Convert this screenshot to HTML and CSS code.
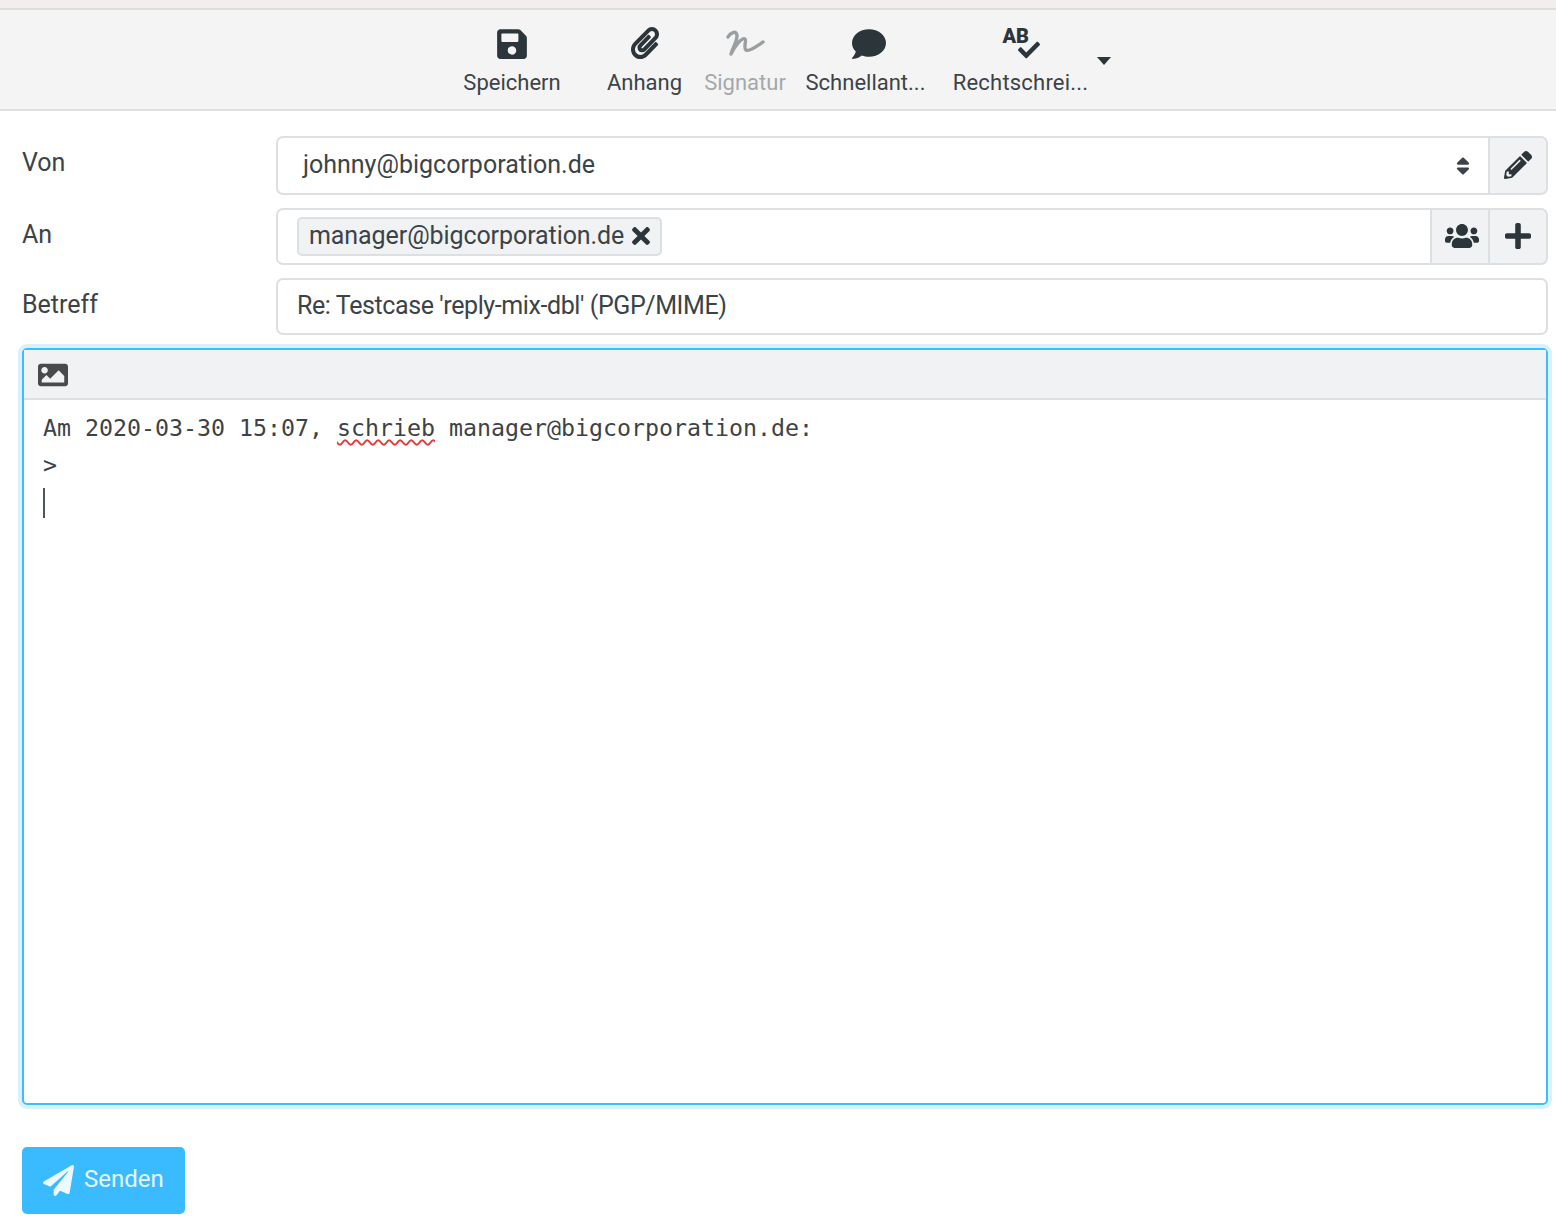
FILE: index.html
```html
<!DOCTYPE html>
<html>
<head>
  <meta charset="UTF-8">
  <title>Antworten</title>
  <link rel="stylesheet" href="styles.css">
</head>
<body>
  <div class="topstrip"></div>
  <div class="toolbar">
    <div class="tool tool-save">
      <svg class="tool-icon" viewBox="0 0 448 512"><path d="M433.941 129.941l-83.882-83.882A48 48 0 0 0 316.118 32H48C21.49 32 0 53.49 0 80v352c0 26.51 21.49 48 48 48h352c26.51 0 48-21.49 48-48V163.882a48 48 0 0 0-14.059-33.941zM224 416c-35.346 0-64-28.654-64-64 0-35.346 28.654-64 64-64s64 28.654 64 64c0 35.346-28.654 64-64 64zm96-304.52V212c0 6.627-5.373 12-12 12H76c-6.627 0-12-5.373-12-12V108c0-6.627 5.373-12 12-12h228.52c3.183 0 6.235 1.264 8.485 3.515l3.48 3.48A11.996 11.996 0 0 1 320 111.48z"/></svg>
      <span>Speichern</span>
    </div>
    <div class="tool tool-attach">
      <svg class="tool-icon" viewBox="0 0 448 512"><path d="M43.246 466.142c-58.43-60.289-57.341-157.511 1.386-217.581L254.392 34c44.316-45.332 116.351-45.336 160.671 0 43.89 44.894 43.943 117.329 0 162.276L232.214 383.128c-29.855 30.537-78.633 30.111-107.982-.998-28.275-29.97-27.368-77.473 1.452-106.953l143.743-146.835c6.182-6.314 16.312-6.422 22.626-.241l22.861 22.379c6.315 6.182 6.422 16.312.241 22.626L171.427 319.927c-4.932 5.045-5.236 13.428-.648 18.292 4.372 4.634 11.245 4.711 15.688.165l182.849-186.851c19.613-20.062 19.613-52.725-.011-72.798-19.189-19.627-49.957-19.637-69.154 0L90.39 293.295c-34.763 35.56-35.299 93.12-1.191 128.313 34.01 35.093 88.985 35.137 123.058.286l172.06-175.999c6.177-6.319 16.307-6.433 22.626-.256l22.877 22.364c6.319 6.177 6.434 16.307.256 22.626l-172.06 175.998c-59.576 60.938-155.943 60.216-214.77-.485z"/></svg>
      <span>Anhang</span>
    </div>
    <div class="tool tool-sign disabled">
      <svg class="tool-icon" viewBox="0 0 40 34"><path class="sign-line" d="M3 10C6 5 12 3 12 9 12 15 7 22 6 27 10 19 17 10 20 12 22 13 18 21 21 23 24 25 32 19 38 15"/></svg>
      <span>Signatur</span>
    </div>
    <div class="tool tool-quick">
      <svg class="tool-icon" viewBox="0 0 512 512"><path d="M256 32C114.6 32 0 125.1 0 240c0 49.6 21.4 95 57 130.7C44.5 421.1 2.7 466 2.2 466.5c-2.2 2.3-2.8 5.7-1.5 8.7S4.8 480 8 480c66.3 0 116-31.8 140.6-51.4 32.7 12.3 69 19.4 107.4 19.4 141.4 0 256-93.1 256-208S397.4 32 256 32z"/></svg>
      <span>Schnellant...</span>
    </div>
    <div class="tool tool-spell">
      <div class="spell-icon">
        <b>AB</b>
        <svg viewBox="0 0 512 512"><path d="M173.898 439.404l-166.4-166.4c-9.997-9.997-9.997-26.206 0-36.204l36.203-36.204c9.997-9.998 26.207-9.998 36.204 0L192 312.69 432.095 72.596c9.997-9.997 26.207-9.997 36.204 0l36.203 36.204c9.997 9.997 9.997 26.206 0 36.204l-294.4 294.401c-9.998 9.997-26.207 9.997-36.204-.001z"/></svg>
      </div>
      <span>Rechtschrei...</span>
    </div>
    <div class="caret"></div>
  </div>

  <div class="form">
    <div class="row row-from">
      <label>Von</label>
      <div class="group">
        <div class="field select">
          <span>johnny@bigcorporation.de</span>
          <svg class="sort" viewBox="0 0 320 512"><path d="M41 288h238c21.4 0 32.1 25.9 17 41L177 448c-9.4 9.4-24.6 9.4-33.9 0L24 329c-15.1-15.1-4.4-41 17-41zm255-105L177 64c-9.4-9.4-24.6-9.4-33.9 0L24 183c-15.1 15.1-4.4 41 17 41h238c21.4 0 32.1-25.9 17-41z"/></svg>
        </div>
        <div class="addon">
          <svg class="pencil" viewBox="0 0 512 512"><path d="M497.9 142.1l-46.1 46.1c-4.7 4.7-12.3 4.7-17 0l-111-111c-4.7-4.7-4.7-12.3 0-17l46.1-46.1c18.7-18.7 49.1-18.7 67.9 0l60.1 60.1c18.8 18.7 18.8 49.1 0 67.9zM284.2 99.8L21.6 362.4.4 483.9c-2.9 16.4 11.4 30.6 27.8 27.8l121.5-21.3 262.6-262.6c4.7-4.7 4.7-12.3 0-17l-111-111c-4.8-4.7-12.4-4.7-17.1 0zM124.1 339.9c-5.5-5.5-5.5-14.3 0-19.8l154-154c5.5-5.5 14.3-5.5 19.8 0s5.5 14.3 0 19.8l-154 154c-5.5 5.5-14.3 5.5-19.8 0zM88 424h48v36.3l-64.5 11.3-31.1-31.1L51.7 376H88v48z"/></svg>
        </div>
      </div>
    </div>
    <div class="row row-to">
      <label>An</label>
      <div class="group">
        <div class="field recipients">
          <div class="chip">
            <span>manager@bigcorporation.de</span>
            <svg class="chip-x" viewBox="0 0 352 512"><path d="M242.72 256l100.07-100.07c12.28-12.28 12.28-32.19 0-44.48l-22.24-22.24c-12.28-12.28-32.19-12.28-44.48 0L176 189.28 75.93 89.21c-12.28-12.28-32.19-12.28-44.48 0L9.21 111.45c-12.28 12.28-12.28 32.19 0 44.48L109.28 256 9.21 356.07c-12.28 12.28-12.28 32.19 0 44.48l22.24 22.24c12.28 12.28 32.2 12.28 44.48 0L176 322.72l100.07 100.07c12.28 12.28 32.2 12.28 44.48 0l22.24-22.24c12.28-12.28 12.28-32.19 0-44.48L242.72 256z"/></svg>
          </div>
        </div>
        <div class="addon addon-users">
          <svg class="users" viewBox="0 0 640 512"><path d="M96 224c35.3 0 64-28.7 64-64s-28.7-64-64-64-64 28.7-64 64 28.7 64 64 64zm448 0c35.3 0 64-28.7 64-64s-28.7-64-64-64-64 28.7-64 64 28.7 64 64 64zm32 32h-64c-17.6 0-33.5 7.1-45.1 18.6 40.3 22.1 68.9 62 75.1 109.4h66c17.7 0 32-14.3 32-32v-32c0-35.3-28.7-64-64-64zm-256 0c61.9 0 112-50.1 112-112S381.9 32 320 32 208 82.1 208 144s50.1 112 112 112zm76.8 32h-8.3c-20.8 10-43.9 16-68.5 16s-47.6-6-68.5-16h-8.3C179.6 288 128 339.6 128 403.2V432c0 26.5 21.5 48 48 48h288c26.5 0 48-21.5 48-48v-28.8c0-63.6-51.6-115.2-115.2-115.2zm-223.7-13.4C161.5 263.1 145.6 256 128 256H64c-35.3 0-64 28.7-64 64v32c0 17.7 14.3 32 32 32h65.9c6.3-47.4 34.9-87.3 75.2-109.4z"/></svg>
        </div>
        <div class="addon">
          <svg class="plus" viewBox="0 0 448 512"><path d="M416 208H272V64c0-17.67-14.33-32-32-32h-32c-17.67 0-32 14.33-32 32v144H32c-17.67 0-32 14.33-32 32v32c0 17.67 14.33 32 32 32h144v144c0 17.67 14.33 32 32 32h32c17.67 0 32-14.33 32-32V304h144c17.67 0 32-14.33 32-32v-32c0-17.67-14.33-32-32-32z"/></svg>
        </div>
      </div>
    </div>
    <div class="row row-subject">
      <label>Betreff</label>
      <div class="group">
        <div class="field subject">Re: Testcase 'reply-mix-dbl' (PGP/MIME)</div>
      </div>
    </div>

    <div class="editor">
      <div class="editor-head">
        <svg class="image-icon" viewBox="0 0 512 512"><path d="M464 448H48c-26.51 0-48-21.49-48-48V112c0-26.51 21.49-48 48-48h416c26.51 0 48 21.49 48 48v288c0 26.51-21.49 48-48 48zM112 120c-30.928 0-56 25.072-56 56s25.072 56 56 56 56-25.072 56-56-25.072-56-56-56zM64 384h384V272l-87.515-87.515c-4.686-4.686-12.284-4.686-16.971 0L208 320l-55.515-55.515c-4.686-4.686-12.284-4.686-16.971 0L64 336v48z"/></svg>
      </div>
      <div class="editor-body">
        <div class="line">Am 2020-03-30 15:07, <span class="misspelt">schrieb</span> manager@bigcorporation.de:</div>
        <div class="line">&gt;</div>
        <div class="line"><span class="cursor"></span></div>
      </div>
    </div>

    <button class="send">
      <svg viewBox="0 0 512 512"><path d="M476 3.2L12.5 270.6c-18.1 10.4-15.8 35.6 2.2 43.2L121 358.4l287.3-253.2c5.5-4.9 13.3 2.6 8.6 8.3L176 407v80.5c0 23.6 28.5 32.9 42.5 15.8L282 426l124.6 52.2c14.2 6 30.4-2.9 33-18.2l72-432C515 7.8 493.3-6.8 476 3.2z"/></svg>
      <span>Senden</span>
    </button>
  </div>
</body>
</html>
```

FILE: styles.css
```css
* { box-sizing: border-box; }
html, body {
  margin: 0; padding: 0;
  background: white;
  overflow: hidden;
  font-family: 'Roboto', sans-serif;
  color: #3c4347;
  height: 100%;
}
svg { fill: #2c363a; display: block; }

.topstrip {
  height: 10px;
  background: #f0efed;
  border-bottom: 2px solid #dcdcda;
}
.toolbar {
  height: 101px;
  background: #f4f4f4;
  border-bottom: 2px solid #dde0e3;
  display: flex;
  padding-left: 452px;
  font-size: 22px;
}
.tool {
  display: flex;
  flex-direction: column;
  align-items: center;
  padding-top: 17px;
  white-space: nowrap;
}
.tool span { margin-top: 9px; line-height: 26px; }
.tool-icon { height: 34px; width: 34px; }
.tool-save { width: 120px; }
.tool-attach { width: 145px; }
.tool-attach .tool-icon { width: 32px; height: 32px; margin-bottom: 2px; }
.tool-sign { width: 56px; }
.tool-sign .tool-icon { width: 40px; }
.tool-quick { width: 185px; }
.tool-quick .tool-icon { margin-left: 7px; }
.tool-spell { width: 125px; }
.tool-spell span { letter-spacing: 0.2px; }
.disabled { color: #a3a8ab; }
.sign-line { fill: none; stroke: #9a9fa2; stroke-width: 3.4; stroke-linecap: round; stroke-linejoin: round; }

.spell-icon { width: 36px; height: 34px; position: relative; }
.spell-icon b {
  position: absolute;
  left: 0; top: -1px;
  font-size: 20px;
  font-weight: 900;
  line-height: 20px;
  color: #2c363a;
}
.spell-icon svg {
  position: absolute;
  left: 15px; top: 12px;
  width: 22px; height: 22px;
}
.caret {
  width: 0; height: 0;
  margin: 47px 0 0 14px;
  border-left: 7px solid transparent;
  border-right: 7px solid transparent;
  border-top: 8px solid #2c363a;
}

.form { padding: 25px 8px 0 22px; font-size: 25px; }
.row { display: flex; height: 57px; margin-bottom: 13px; }
.row-from { height: 59px; }
.row label { width: 254px; padding-top: 11px; line-height: 32px; }
.group { flex: 1; display: flex; }
.field {
  flex: 1;
  border: 2px solid #dde0e3;
  border-radius: 7px 0 0 7px;
  background: white;
  display: flex;
  align-items: center;
}
.select { padding: 0 18px 2px 25px; justify-content: space-between; }
.sort { width: 14px; height: 22px; margin-top: 2px; fill: #3c4347; }
.recipients { padding: 0 0 1px 19px; }
.subject { padding: 0 0 2px 19px; border-radius: 7px; letter-spacing: -0.4px; }
.addon {
  width: 60px;
  margin-left: -2px;
  padding-bottom: 2px;
  border: 2px solid #dde0e3;
  background: #f0f2f4;
  display: flex;
  align-items: center;
  justify-content: center;
}
.addon:last-child { border-radius: 0 7px 7px 0; }
.addon-users { padding-left: 4px; }
.pencil { width: 28px; height: 28px; }
.users { width: 34px; height: 28px; }
.plus { width: 26px; height: 30px; }
.chip {
  height: 39px;
  padding: 0 10px 1px 10px;
  display: flex;
  align-items: center;
  gap: 8px;
  background: #f0f2f4;
  border: 2px solid #dde0e3;
  border-radius: 5px;
  letter-spacing: -0.08px;
}
.chip-x { width: 18px; height: 26px; }

.editor {
  height: 757px;
  border: 2px solid #3dbdfd;
  border-radius: 5px;
  box-shadow: 0 0 0 4px #d8f1fe;
}
.editor-head {
  height: 50px;
  background: #f1f2f4;
  border-bottom: 2px solid #dde0e3;
  padding: 10px 0 0 14px;
}
.image-icon { width: 30px; height: 30px; fill: #4a4a4a; }
.editor-body {
  padding: 9px 0 0 19px;
  font-family: 'DejaVu Sans Mono', monospace;
  font-size: 23.25px;
  line-height: 37px;
}
.line { height: 37px; white-space: pre; }
.misspelt { text-decoration: underline wavy #e53935 1.5px; text-underline-offset: 3px; }
.cursor {
  display: block;
  width: 2px;
  height: 30px;
  margin-top: 5px;
  background: #4d5558;
}

.send {
  margin-top: 42px;
  width: 163px;
  height: 67px;
  background: #3bbbff;
  color: #e6f6ff;
  border: none;
  border-radius: 5px;
  font-family: 'Roboto', sans-serif;
  font-size: 24px;
  display: flex;
  align-items: center;
  padding: 0 0 3px 21px;
  gap: 10px;
}
.send svg { width: 31px; height: 31px; margin-top: 3px; fill: #eef9ff; }
```
